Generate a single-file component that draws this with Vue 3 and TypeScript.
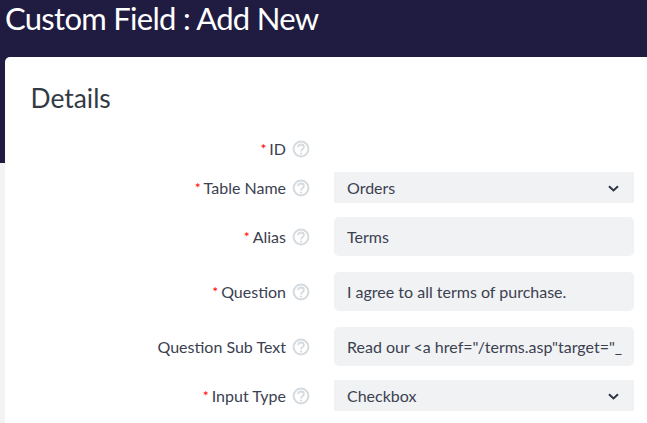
<script setup lang="ts">
interface Field {
  label: string;
  required: boolean;
  kind: 'none' | 'select' | 'input';
  value?: string;
}
const fields: Field[] = [
  { label: 'ID', required: true, kind: 'none' },
  { label: 'Table Name', required: true, kind: 'select', value: 'Orders' },
  { label: 'Alias', required: true, kind: 'input', value: 'Terms' },
  { label: 'Question', required: true, kind: 'input', value: 'I agree to all terms of purchase.' },
  { label: 'Question Sub Text', required: false, kind: 'input', value: 'Read our <a href="/terms.asp"target="_blank">terms</a>' },
  { label: 'Input Type', required: true, kind: 'select', value: 'Checkbox' },
];
</script>

<template>
  <div class="page">
    <header class="banner">
      <h1 class="title">Custom Field : Add New</h1>
    </header>
    <main class="card">
      <h2 class="heading">Details</h2>
      <form class="form">
        <div v-for="f in fields" :key="f.label" class="row" :class="'row-' + f.kind">
          <label class="label">
            <span v-if="f.required" class="req">*</span>
            <span>{{ f.label }}</span>
          </label>
          <svg class="help" viewBox="0 0 18 18" width="18" height="18" aria-hidden="true">
            <circle cx="9" cy="9" r="7.4" fill="none" stroke="#d6dbdf" stroke-width="2" />
            <path d="M6.2 7.2c0-1.6 1.3-2.7 2.9-2.7s2.8 1 2.8 2.5c0 1.2-.7 1.8-1.5 2.3-.8.5-1.3 1-1.3 1.8v.5" fill="none" stroke="#d6dbdf" stroke-width="1.8" />
            <circle cx="9" cy="13.6" r="1.1" fill="#d6dbdf" />
          </svg>
          <div v-if="f.kind === 'select'" class="select-wrap">
            <select class="control select">
              <option>{{ f.value }}</option>
            </select>
            <svg class="chevron" viewBox="0 0 11 7" width="11" height="7" aria-hidden="true">
              <path d="M1 1.2 5.5 5.4 10 1.2" fill="none" stroke="#2f3542" stroke-width="2" />
            </svg>
          </div>
          <input v-else-if="f.kind === 'input'" class="control input" type="text" readonly :value="f.value" />
        </div>
      </form>
    </main>
  </div>
</template>

<style>
html, body {
  margin: 0;
  overflow: hidden;
  background: #f3f3f3;
}
</style>

<style scoped>
.page {
  width: 647px;
  height: 423px;
  overflow: hidden;
  font-family: Lato, "Liberation Sans", sans-serif;
  color: #3b4150;
}
.banner {
  height: 163px;
  background: #201c41;
  box-sizing: border-box;
  padding-left: 5px;
}
.title {
  margin: 0;
  font-size: 31px;
  line-height: 36px;
  letter-spacing: -0.7px;
  font-weight: 400;
  color: #fff;
}
.card {
  margin: -106px 0 0 5px;
  background: #fff;
  border-radius: 5px 0 0 0;
  padding-top: 25px;
  height: 400px;
  box-sizing: border-box;
}
.heading {
  margin: 0 0 0 25.5px;
  font-size: 26.4px;
  line-height: 33px;
  font-weight: 400;
  color: #333a45;
}
.form {
  margin-top: 25px;
  display: flex;
  flex-direction: column;
  gap: 14px;
}
.row {
  display: flex;
  align-items: center;
}
.row-input + .row-input {
  margin-top: 2px;
}
.row-none {
  height: 18px;
}
.label {
  width: 281px;
  display: flex;
  justify-content: flex-end;
  gap: 3px;
  font-size: 16px;
  line-height: 18px;
}
.req {
  color: #f00;
  font-size: 14px;
}
.help {
  margin-left: 6px;
  flex: none;
}
.select-wrap {
  position: relative;
  margin-left: 24px;
  width: 300px;
}
.control {
  display: block;
  width: 300px;
  box-sizing: border-box;
  border: 0;
  outline: 0;
  background: #f1f2f4;
  color: #3b4150;
  font-family: inherit;
  font-size: 16px;
  padding: 0 12px 0 13px;
}
.select {
  height: 31px;
  appearance: none;
  border-radius: 0;
}
.input {
  height: 39px;
  margin-left: 24px;
  border-radius: 5px;
}
.chevron {
  position: absolute;
  right: 15px;
  top: 13px;
}
</style>
